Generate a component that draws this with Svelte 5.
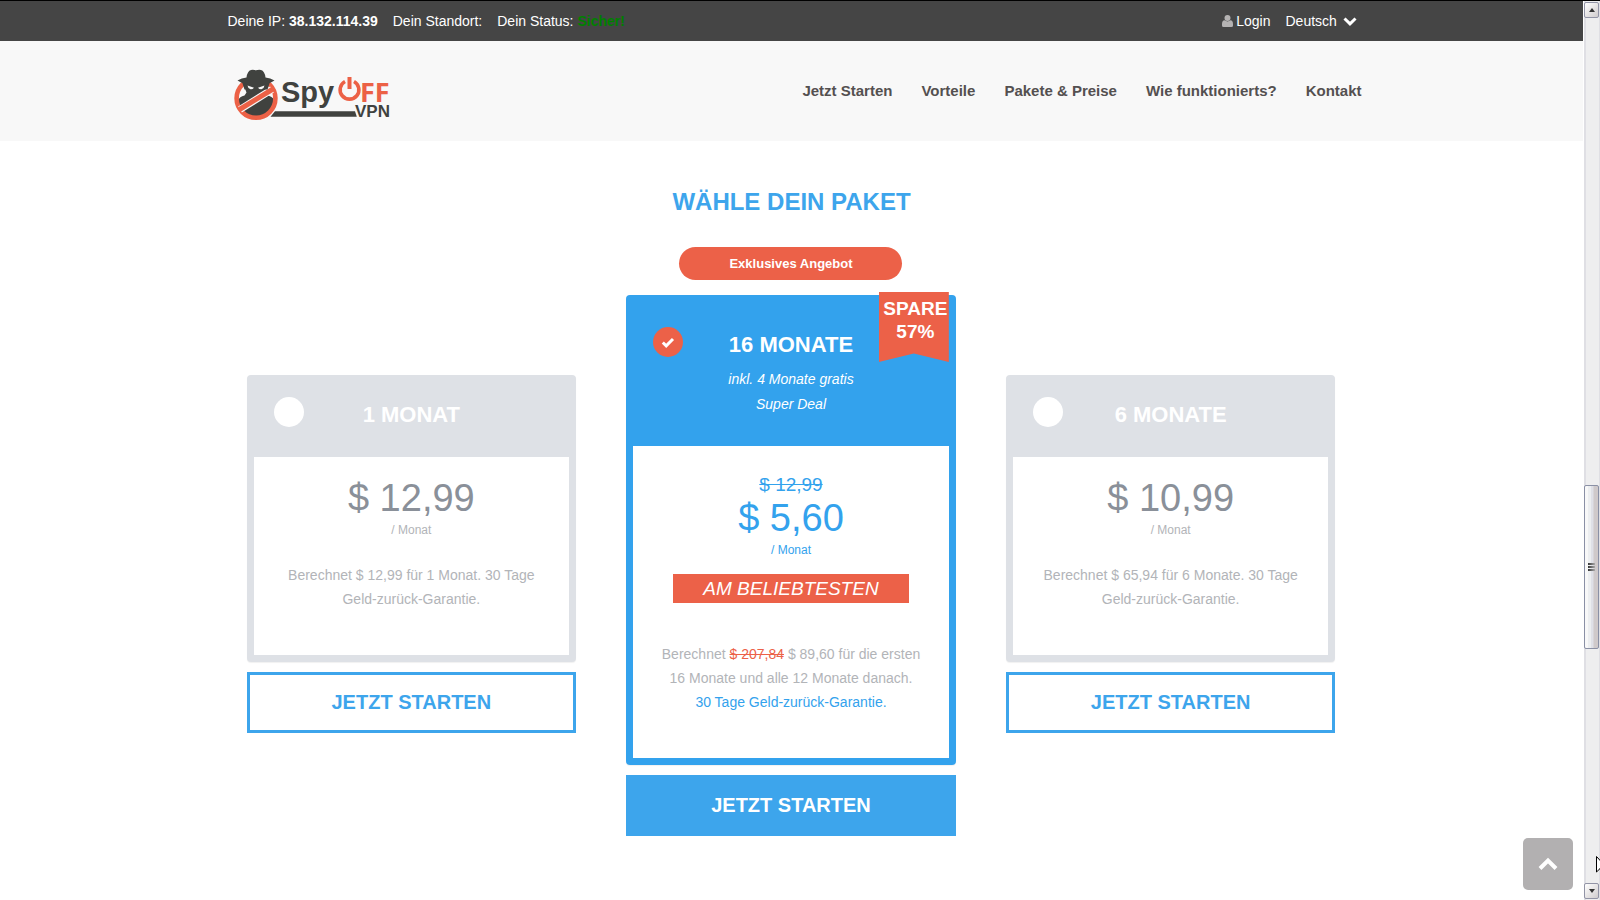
<script lang="ts">
	interface Plan {
		id: string;
		title: string;
		price: string;
		oldPrice?: string;
		notes?: string[];
		saving?: string;
		featured?: boolean;
	}

	const navItems = ['Jetzt Starten', 'Vorteile', 'Pakete & Preise', 'Wie funktionierts?', 'Kontakt'];

	const plans: Plan[] = [
		{ id: 'm1', title: '1 MONAT', price: '$ 12,99' },
		{
			id: 'm16',
			title: '16 MONATE',
			price: '$ 5,60',
			oldPrice: '$ 12,99',
			notes: ['inkl. 4 Monate gratis', 'Super Deal'],
			saving: '57%',
			featured: true
		},
		{ id: 'm6', title: '6 MONATE', price: '$ 10,99' }
	];

	let selected = $state('m16');
	let language = $state('de');
</script>

<div class="window">
	<div class="page">
		<div class="topbar">
			<div class="container topbar-inner">
				<span>Deine IP: <b>38.132.114.39</b></span>
				<span>Dein Standort:</span>
				<span>Dein Status: <b class="safe">Sicher!</b></span>
				<a class="login" href="#login">
					<svg width="11" height="12" viewBox="0 0 11 12" aria-hidden="true">
						<circle cx="5.5" cy="3" r="3" />
						<path d="M0 10.5V9Q0 5.6 2.6 5.3 5.5 7.6 8.4 5.3 11 5.6 11 9v1.500Q11 12 9.500 12h-8Q0 12 0 10.500z" />
					</svg>
					Login
				</a>
				<div class="language">
					<select aria-label="Sprache" bind:value={language}>
						<option value="de">Deutsch</option>
					</select>
					<svg width="14" height="9" viewBox="0 0 14 9" aria-hidden="true">
						<path d="M1.500 1.500 7 6.800l5.500-5.300" />
					</svg>
				</div>
			</div>
		</div>

		<header class="header">
			<div class="container header-inner">
				<a class="logo" href="#start" aria-label="SpyOFF VPN">
					<svg width="162" height="56" viewBox="0 0 162 56">
						<path
							d="M12.500 18q1 4.500 2 6.500l-2 3q-5 1-6.500 5Q5 47 24 49.500 42 47 42 31.500q-2-3.500-8-4.500l-1.500-2.500q1.500-2 2-6.500z"
							fill="#40423f"
						/>
						<circle cx="24" cy="30.300" r="19.400" fill="none" stroke="#ec6146" stroke-width="4.600" />
						<path d="M8 41.500 40 21.500" stroke="#f8f8f8" stroke-width="7" />
						<path d="M7.500 41.500 41 21" stroke="#ec6146" stroke-width="5" />
						<path d="M10 14h28l-2.500 7.500H12.500z" fill="#40423f" />
						<path d="M15.500 17.500l6.500 2.300q-1.500 1.800-3.500 1.500-2.600-.8-3-3.800zM32.500 17.500l-6.500 2.300q1.500 1.800 3.500 1.500 2.600-.8 3-3.800z" fill="#f8f8f8" />
						<path d="M5.500 12.500q4-2.500 9-3 .8-6.500 4.500-7.500 2.500-.4 5 .3 2.500-.7 5-.3 3.700 1 4.500 7.500 5 .5 9 3-6.500 4.500-18.500 4.500T5.500 12.500z" fill="#40423f" />
						<path d="M43 43.300h80l1.800 5.400H38.500z" fill="#40423f" />
						<text class="logo-spy" x="49" y="34">Spy</text>
						<path d="M113 13.500a9.400 9.400 0 1 0 9 0" fill="none" stroke="#ec6146" stroke-width="3.600" />
						<path d="M117.500 9v12" stroke="#ec6146" stroke-width="4" />
						<text class="logo-off" x="128" y="34">FF</text>
						<text class="logo-vpn" x="123" y="49">VPN</text>
					</svg>
				</a>
				<nav class="nav" aria-label="Hauptmenü">
					{#each navItems as item (item)}
						<a href="#top">{item}</a>
					{/each}
				</nav>
			</div>
		</header>

		<main class="container pricing">
			<h1>WÄHLE DEIN PAKET</h1>
			<div class="plans">
				{#each plans as plan (plan.id)}
					<section class="plan" class:featured={plan.featured}>
						{#if plan.featured}
							<div class="offer">Exklusives Angebot</div>
						{/if}
						<div class="card">
							{#if plan.saving}
								<div class="ribbon">SPARE<br />{plan.saving}</div>
							{/if}
							<div class="card-head">
								<span class="pick">
									<input type="radio" name="plan" id={plan.id} value={plan.id} bind:group={selected} />
									{#if selected === plan.id}
										<svg width="14" height="11" viewBox="0 0 14 11" aria-hidden="true">
											<path d="M1.800 5.500 5.200 8.800 12 2" />
										</svg>
									{/if}
								</span>
								<label class="title" for={plan.id}>{plan.title}</label>
								{#if plan.notes}
									<div class="notes">
										{#each plan.notes as note (note)}
											<div>{note}</div>
										{/each}
									</div>
								{/if}
							</div>
							<div class="card-body">
								{#if plan.oldPrice}
									<s class="old-price">{plan.oldPrice}</s>
								{/if}
								<div class="price">{plan.price}</div>
								<div class="period">/ Monat</div>
								{#if plan.featured}
									<div class="popular">AM BELIEBTESTEN</div>
								{/if}
								<p class="terms">
									{#if plan.id === 'm1'}
										Berechnet $ 12,99 für 1 Monat. 30 Tage Geld-zurück-Garantie.
									{:else if plan.id === 'm6'}
										Berechnet $ 65,94 für 6 Monate. 30 Tage Geld-zurück-Garantie.
									{:else}
										Berechnet <s>$ 207,84</s> $ 89,60 für die ersten 16 Monate und alle 12 Monate danach.
										<span class="guarantee">30 Tage Geld-zurück-Garantie.</span>
									{/if}
								</p>
							</div>
						</div>
						<button class="start" type="button">JETZT STARTEN</button>
					</section>
				{/each}
			</div>
		</main>
	</div>

	<button class="to-top" type="button" aria-label="Nach oben">
		<svg width="20" height="14" viewBox="0 0 20 14" aria-hidden="true">
			<path d="M2 11.500 10 3.500l8 8" />
		</svg>
	</button>

	<div class="scrollbar">
		<button class="arrow" type="button" aria-label="Aufwärts">
			<svg width="6" height="4" viewBox="0 0 6 4"><path d="M0 4 3 0l3 4z" /></svg>
		</button>
		<div class="track-before"></div>
		<div class="thumb"><i></i><i></i><i></i></div>
		<div class="track-after"></div>
		<button class="arrow" type="button" aria-label="Abwärts">
			<svg width="6" height="4" viewBox="0 0 6 4"><path d="M0 0h6L3 4z" /></svg>
		</button>
	</div>

	<svg class="pointer" width="12" height="18" viewBox="0 0 12 18" aria-hidden="true">
		<path d="M.5.500v15.500l3.500-3.400 2.500 5 2-1-2.400-4.600H11z" />
	</svg>
</div>

<style>
	:global(body) {
		background: #fff;
	}

	.window {
		--blue: #3da5ec;
		--red: #ec6148;
		position: relative;
		display: flex;
		box-sizing: border-box;
		min-height: 100vh;
		overflow: hidden;
		border-top: 1px solid #000;
		font-family: 'Liberation Sans', Arial, sans-serif;
		font-size: 14px;
		color: #b2b4b8;
	}

	.window a {
		color: inherit;
		text-decoration: none;
	}

	.page {
		flex: 1;
		min-width: 0;
	}

	.container {
		box-sizing: border-box;
		max-width: 1140px;
		margin: 0 auto;
	}

	.topbar {
		background: #454545;
		color: #fff;
	}

	.topbar-inner {
		display: flex;
		align-items: center;
		gap: 15px;
		min-height: 40px;
		padding: 0 5px 0 6px;
	}

	.safe {
		color: #008000;
	}

	.login {
		display: flex;
		align-items: center;
		gap: 3px;
		margin-left: auto;
	}

	.login svg {
		fill: #b5b3b3;
	}

	.language {
		display: flex;
		align-items: center;
		gap: 5px;
	}

	.language select {
		appearance: none;
		padding: 0;
		border: 0;
		background: none;
		color: inherit;
		font: inherit;
	}

	.language path,
	.pick path,
	.to-top path {
		fill: none;
		stroke: #fff;
		stroke-width: 3;
	}

	.header {
		background: #f8f8f8;
	}

	.header-inner {
		display: flex;
		align-items: center;
		justify-content: space-between;
		box-sizing: border-box;
		min-height: 100px;
		padding-left: 10px;
	}

	.logo {
		padding-top: 10px;
	}

	.logo svg {
		display: block;
	}

	.logo text {
		font-weight: 700;
		fill: #40423f;
	}

	.logo .logo-spy {
		font-size: 29px;
	}

	.logo .logo-off {
		font-family: 'Open Sans', sans-serif;
		font-size: 27px;
		fill: #ec6146;
	}

	.logo .logo-vpn {
		font-size: 17px;
	}

	.nav {
		display: flex;
		gap: 29px;
		padding-bottom: 2px;
		font-size: 15px;
		font-weight: 700;
		color: #545050;
	}

	.pricing {
		padding: 46px 0 64px;
		text-align: center;
	}

	h1 {
		margin: 0 0 30px;
		font-size: 24px;
		line-height: 30px;
		color: var(--blue);
	}

	.plans {
		display: grid;
		grid-template-columns: repeat(3, 1fr);
		gap: 50px;
		align-items: start;
		padding: 0 26px 0 25px;
	}

	.plan {
		--frame: #dee1e6;
		--tone: #8a9099;
		padding-top: 128px;
	}

	.featured {
		--frame: #33a2ed;
		--tone: #33a2ed;
		padding-top: 0;
	}

	.offer {
		width: 223px;
		margin: 0 auto 15px;
		border-radius: 17px;
		background: var(--red);
		color: #fff;
		font-size: 13px;
		font-weight: 700;
		line-height: 33px;
	}

	.card {
		position: relative;
		padding: 0 7px 7px;
		border-radius: 4px;
		background: var(--frame);
		box-shadow: 0 1px 1px rgba(0, 0, 0, 0.06);
	}

	.card-head {
		display: grid;
		grid-template-columns: 30px 1fr 30px;
		padding: 22px 20px 25px;
		color: #fff;
	}

	.featured .card-head {
		padding: 32px 20px 29px;
	}

	.pick {
		display: grid;
		place-items: center;
		width: 30px;
		height: 30px;
	}

	.pick input,
	.pick svg {
		grid-area: 1 / 1;
	}

	.pick input {
		appearance: none;
		width: 30px;
		height: 30px;
		margin: 0;
		border-radius: 50%;
		background: #fff;
	}

	.pick input:checked {
		background: var(--red);
	}

	.pick svg {
		position: relative;
		pointer-events: none;
	}

	.title {
		font-size: 22px;
		font-weight: 700;
		line-height: 35px;
	}

	.notes {
		grid-column: 2;
		margin-top: 5px;
		font-style: italic;
		line-height: 25px;
	}

	.ribbon {
		position: absolute;
		top: -3px;
		right: 7px;
		box-sizing: border-box;
		width: 70px;
		height: 70px;
		padding: 5px 0 0 3px;
		background: var(--red);
		clip-path: polygon(0 0, 100% 0, 100% 100%, 50% 88%, 0 100%);
		color: #fff;
		font-size: 19px;
		font-weight: 700;
		line-height: 23px;
	}

	.card-body {
		padding: 18px 24px 44px;
		background: #fff;
	}

	.featured .card-body {
		padding-top: 29px;
	}

	.old-price {
		display: block;
		font-size: 19px;
		line-height: 20px;
		color: var(--tone);
	}

	.price {
		font-size: 38px;
		line-height: 46px;
		color: var(--tone);
	}

	.period {
		font-size: 12px;
		line-height: 18px;
	}

	.featured .period,
	.guarantee {
		color: var(--tone);
	}

	.popular {
		margin: 15px 16px 0;
		background: var(--red);
		color: #fff;
		font-size: 19px;
		font-style: italic;
		line-height: 29px;
	}

	.terms {
		margin: 24px 0 0;
		line-height: 24px;
	}

	.featured .terms {
		margin-top: 39px;
	}

	.terms s {
		color: var(--red);
	}

	.guarantee {
		display: block;
	}

	.start {
		display: block;
		box-sizing: border-box;
		width: 100%;
		margin-top: 10px;
		padding: 0;
		border: 3px solid var(--blue);
		background: #fff;
		color: var(--blue);
		font-family: inherit;
		font-size: 20px;
		font-weight: 700;
		line-height: 55px;
	}

	.featured .start {
		background: var(--blue);
		color: #fff;
	}

	.to-top {
		position: absolute;
		right: 27px;
		bottom: 10px;
		display: grid;
		place-items: center;
		width: 50px;
		height: 52px;
		padding: 0;
		border: 0;
		border-radius: 5px;
		background: #b2b0b1;
	}

	.to-top path {
		stroke-width: 4;
	}

	.scrollbar {
		display: flex;
		flex-direction: column;
		box-sizing: border-box;
		width: 17px;
		padding: 1px 0;
		border-left: 1px solid #fff;
		background: linear-gradient(90deg, #dfdfe4 0 2px, #eeeeef 2px 15px, #dfdfe4 15px);
	}

	.arrow {
		display: grid;
		place-items: center;
		width: 15px;
		height: 16px;
		padding: 0;
		border: 1px solid #9294a6;
		border-radius: 2px;
		background: linear-gradient(135deg, #fff, #d0cccd);
	}

	.arrow path {
		fill: #333;
	}

	.track-before {
		flex: 2;
	}

	.track-after {
		flex: 1;
	}

	.thumb {
		display: flex;
		flex-direction: column;
		align-items: center;
		justify-content: center;
		gap: 1px;
		box-sizing: border-box;
		width: 15px;
		height: 164px;
		border: 1px solid #8a90a5;
		border-radius: 2px;
		background: linear-gradient(90deg, #f8f8f8 0 3px, #eceef0 3px 6px, #dfe0e7 6px 8px, #cfc9ca 9px);
	}

	.thumb i {
		width: 7px;
		height: 2px;
		background: linear-gradient(90deg, #333, #aaa);
	}

	.pointer {
		position: absolute;
		right: -8px;
		bottom: 26px;
		fill: #fff;
		stroke: #000;
	}
</style>
